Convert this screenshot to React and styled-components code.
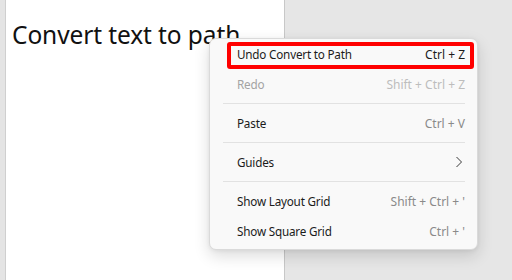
import React from "react";
import styled, { createGlobalStyle, css } from "styled-components";

const Global = createGlobalStyle`
  html, body { margin: 0; padding: 0; }
  body {
    background: #e6e6e6;
    font-family: "Noto Sans", "Open Sans", sans-serif;
    width: 512px;
    height: 280px;
    overflow: hidden;
  }
`;

const Stage = styled.div`
  position: relative;
  display: flex;
  width: 512px;
  height: 280px;
  background: #e6e6e6;
`;

const Strip = styled.div`
  width: 5px;
  background: #e4e4e4;
  border-right: 1px solid #cfcfcf;
`;

const Page = styled.div`
  width: 279px;
  background: #ffffff;
  border-right: 1px solid #c8c8c8;
  padding: 18px 0 0 6px;
  box-sizing: border-box;
`;

const Title = styled.div`
  font-family: "Noto Sans", sans-serif;
  font-size: 24.5px;
  line-height: 34px;
  color: #111111;
  white-space: nowrap;
  letter-spacing: -0.1px;
`;

const Menu = styled.div`
  position: absolute;
  left: 209px;
  top: 38px;
  width: 269px;
  box-sizing: border-box;
  padding: 1px 0 3px;
  background: #f9f9f9;
  border: 1px solid #dadada;
  border-radius: 7px;
  box-shadow: 0 6px 16px rgba(0, 0, 0, 0.14), 0 1px 4px rgba(0, 0, 0, 0.06);
  font-family: "Noto Sans", sans-serif;
  font-size: 11.7px;
`;

const Item = styled.div`
  display: flex;
  align-items: center;
  justify-content: space-between;
  height: 30px;
  padding: 0 12px 0 27px;
  color: ${(p) => (p.$disabled ? "#a3a3a3" : "#1b1b1b")};
  ${(p) =>
    p.$marked &&
    css`
      height: 27px;
      margin: 2px 3px 0 17px;
      padding: 0 5px 3px 6px;
      border: 4px solid #ff0000;
      border-radius: 3px;
      box-sizing: border-box;
    `}
`;

const Label = styled.span`
  letter-spacing: -0.2px;
`;

const Shortcut = styled.span`
  font-size: 12px;
  color: ${(p) => (p.$dark ? "#1b1b1b" : p.$disabled ? "#bdbdbd" : "#8a8a8a")};
`;

const Sep = styled.div`
  height: 1px;
  margin: 4px 12px 4px 13px;
  background: #e2e2e2;
`;

const Chevron = () => (
  <svg width="8" height="12" viewBox="0 0 8 12" style={{ marginRight: 2 }}>
    <path d="M1.5 1 L6.5 6 L1.5 11" fill="none" stroke="#3a3a3a" strokeWidth="1" />
  </svg>
);

export default function App() {
  return (
    <>
      <Global />
      <Stage>
        <Strip />
        <Page>
          <Title>Convert text to path</Title>
        </Page>
        <Menu>
          <Item $marked>
            <Label>Undo Convert to Path</Label>
            <Shortcut $dark>Ctrl + Z</Shortcut>
          </Item>
          <Item $disabled>
            <Label>Redo</Label>
            <Shortcut $disabled>Shift + Ctrl + Z</Shortcut>
          </Item>
          <Sep />
          <Item>
            <Label>Paste</Label>
            <Shortcut>Ctrl + V</Shortcut>
          </Item>
          <Sep />
          <Item>
            <Label>Guides</Label>
            <Chevron />
          </Item>
          <Sep />
          <Item>
            <Label>Show Layout Grid</Label>
            <Shortcut>Shift + Ctrl + '</Shortcut>
          </Item>
          <Item>
            <Label>Show Square Grid</Label>
            <Shortcut>Ctrl + '</Shortcut>
          </Item>
        </Menu>
      </Stage>
    </>
  );
}
